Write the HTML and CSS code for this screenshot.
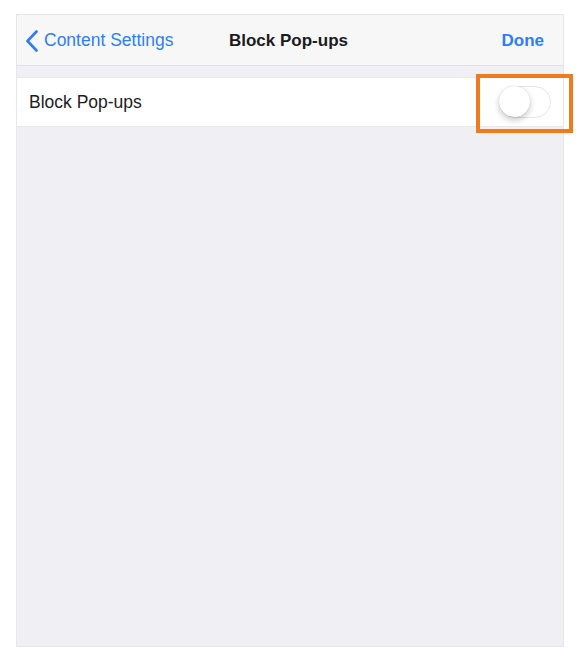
FILE: index.html
```html
<!DOCTYPE html>
<html lang="en">
<head>
    <meta charset="UTF-8">
    <title>Block Pop-ups</title>
    <link rel="stylesheet" href="styles.css">
</head>
<body>
    <div class="panel">
        <header class="nav-bar">
            <a class="nav-back" href="#">
                <svg class="chevron" width="14" height="22" viewBox="0 0 14 22">
                    <polyline points="11.5,1.5 2.5,11 11.5,20.5" fill="none" stroke="#2f7df6" stroke-width="2.6" stroke-linecap="round" stroke-linejoin="round"/>
                </svg>
                <span>Content Settings</span>
            </a>
            <h1 class="nav-title">Block Pop-ups</h1>
            <a class="nav-done" href="#">Done</a>
        </header>

        <div class="settings-list">
            <div class="settings-row">
                <span class="row-label">Block Pop-ups</span>
                <div class="toggle">
                    <span class="toggle-knob"></span>
                </div>
                <span class="highlight"></span>
            </div>
        </div>
    </div>
</body>
</html>
```

FILE: styles.css
```css
:root {
    --ios-blue: #2f7df6;
    --text-dark: #1c1c1e;
    --bg-gray: #efeff4;
    --nav-bg: #f7f7f8;
    --line: #e0e0e5;
    --orange: #f07b1f;
}

* {
    margin: 0;
    padding: 0;
    box-sizing: border-box;
}

body {
    font-family: 'Liberation Sans', Arial, sans-serif;
    background: #ffffff;
    padding: 14px 0 0 16px;
    color: var(--text-dark);
}

.panel {
    width: 548px;
    height: 633px;
    background: var(--bg-gray);
    border: 1px solid #e6e6eb;
}

/* Nav bar */
.nav-bar {
    height: 51px;
    background: var(--nav-bg);
    border-bottom: 1px solid var(--line);
    display: flex;
    align-items: center;
    justify-content: space-between;
    position: relative;
    padding: 1px 19px 0 8px;
}

.nav-back {
    display: flex;
    align-items: center;
    gap: 5px;
    color: var(--ios-blue);
    text-decoration: none;
    font-size: 17.5px;
}

.nav-title {
    position: absolute;
    left: 0;
    right: 3px;
    text-align: center;
    font-size: 17px;
    font-weight: 700;
    pointer-events: none;
}

.nav-done {
    color: var(--ios-blue);
    text-decoration: none;
    font-size: 17px;
    font-weight: 700;
}

/* Settings list */
.settings-list {
    margin-top: 11px;
    background: #ffffff;
    border-top: 1px solid #e8e8ec;
    border-bottom: 1px solid #e8e8ec;
}

.settings-row {
    height: 48px;
    display: flex;
    align-items: center;
    justify-content: space-between;
    padding: 0 12px 0 12px;
    position: relative;
}

.row-label {
    font-size: 17.5px;
}

.toggle {
    width: 52px;
    height: 32px;
    border-radius: 16px;
    border: 1.5px solid #e5e5ea;
    background: #ffffff;
    position: relative;
}

.toggle-knob {
    position: absolute;
    top: -1px;
    left: -1px;
    width: 31px;
    height: 31px;
    border-radius: 50%;
    background: #ffffff;
    box-shadow: 0 3px 6px rgba(0,0,0,0.22), 0 0 1px rgba(0,0,0,0.2);
}

.highlight {
    position: absolute;
    right: -10px;
    top: -4px;
    width: 97px;
    height: 59px;
    border: 4px solid var(--orange);
}
```
